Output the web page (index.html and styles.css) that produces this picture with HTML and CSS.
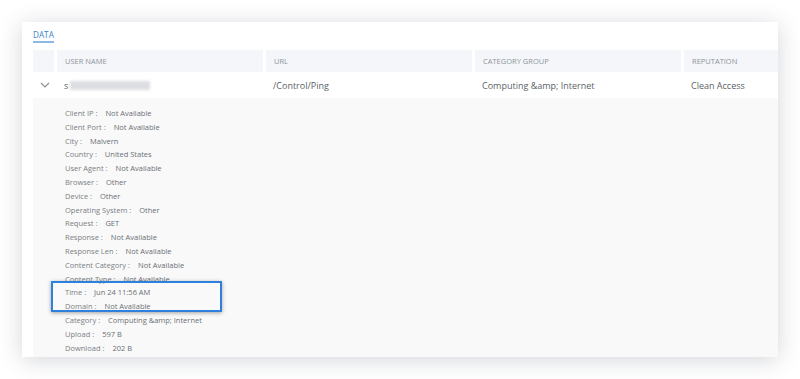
FILE: index.html
```html
<!DOCTYPE html>
<html lang="en">
<head>
    <meta charset="UTF-8">
    <meta name="viewport" content="width=device-width, initial-scale=1.0">
    <title>Data</title>
    <link rel="stylesheet" href="styles.css">
</head>
<body>
    <div class="card">
        <div class="tabs">
            <span class="tab active">DATA</span>
        </div>

        <div class="table">
            <div class="head-row">
                <div class="head-cell"></div>
                <div class="head-cell">USER NAME</div>
                <div class="head-cell">URL</div>
                <div class="head-cell">CATEGORY GROUP</div>
                <div class="head-cell">REPUTATION</div>
            </div>
            <div class="body-row">
                <div class="cell toggle">
                    <svg width="10" height="6" viewBox="0 0 10 6"><path d="M1 1l4 4 4-4" fill="none" stroke="#8a8f96" stroke-width="1.1"/></svg>
                </div>
                <div class="cell">s<span class="blurred"></span></div>
                <div class="cell">/Control/Ping</div>
                <div class="cell">Computing &amp;amp; Internet</div>
                <div class="cell">Clean Access</div>
            </div>
        </div>

        <div class="details">
            <div class="line"><span class="key">Client IP :</span>Not Available</div>
            <div class="line"><span class="key">Client Port :</span>Not Available</div>
            <div class="line"><span class="key">City :</span>Malvern</div>
            <div class="line"><span class="key">Country :</span>United States</div>
            <div class="line"><span class="key">User Agent :</span>Not Available</div>
            <div class="line"><span class="key">Browser :</span>Other</div>
            <div class="line"><span class="key">Device :</span>Other</div>
            <div class="line"><span class="key">Operating System :</span>Other</div>
            <div class="line"><span class="key">Request :</span>GET</div>
            <div class="line"><span class="key">Response :</span>Not Available</div>
            <div class="line"><span class="key">Response Len :</span>Not Available</div>
            <div class="line"><span class="key">Content Category :</span>Not Available</div>
            <div class="line"><span class="key">Content Type :</span>Not Available</div>
            <div class="line"><span class="key">Time :</span>Jun 24 11:56 AM</div>
            <div class="line"><span class="key">Domain :</span>Not Available</div>
            <div class="line"><span class="key">Category :</span>Computing &amp;amp; Internet</div>
            <div class="line"><span class="key">Upload :</span>597 B</div>
            <div class="line"><span class="key">Download :</span>202 B</div>
        </div>

        <!-- highlight around time / domain -->
        <div class="highlight"></div>
    </div>
</body>
</html>
```

FILE: styles.css
```css
body {
    margin: 0;
    padding: 22px;
    background: #ffffff;
    font-family: "Open Sans", "Noto Sans", sans-serif;
}
.card {
    position: relative;
    width: 745px;
    height: 335px;
    padding-left: 11px;
    background: #ffffff;
    box-shadow: 0 3px 22px rgba(40, 50, 70, 0.2);
    overflow: hidden;
}
.tabs {
    height: 28px;
    display: flex;
    align-items: flex-start;
}
.tab {
    margin-top: 7px;
    padding-bottom: 1px;
    font-size: 8.2px;
    color: #3b82c9;
    border-bottom: 2px solid #8fb9e3;
}
.head-row, .body-row {
    display: grid;
    grid-template-columns: 21px repeat(4, 206px);
    column-gap: 3px;
}
.head-cell {
    height: 22px;
    line-height: 22px;
    padding-left: 8px;
    background: #f4f6f9;
    font-size: 7.5px;
    color: #8d939b;
}
.head-cell:first-child {
    padding-left: 0;
}
.body-row {
    height: 26px;
}
.cell {
    display: flex;
    align-items: center;
    padding-left: 7px;
    font-size: 9px;
    color: #5a5f66;
}
.blurred {
    display: inline-block;
    width: 80px;
    height: 9px;
    margin-left: 2px;
    background: #dcdee1;
    filter: blur(1.8px);
}
.details {
    height: 259px;
    padding: 9px 0 0 32px;
    background: #f9f9f9;
}
.line {
    height: 13.8px;
    line-height: 13.8px;
    font-size: 7.5px;
    color: #6a6f75;
    white-space: nowrap;
}
.key {
    margin-right: 8px;
    color: #7a7f85;
}
.highlight {
    position: absolute;
    left: 29px;
    top: 259px;
    width: 167px;
    height: 27px;
    border: 2px solid #2f7fdc;
    box-shadow: 0 1px 4px rgba(0, 0, 0, 0.35);
}
```
